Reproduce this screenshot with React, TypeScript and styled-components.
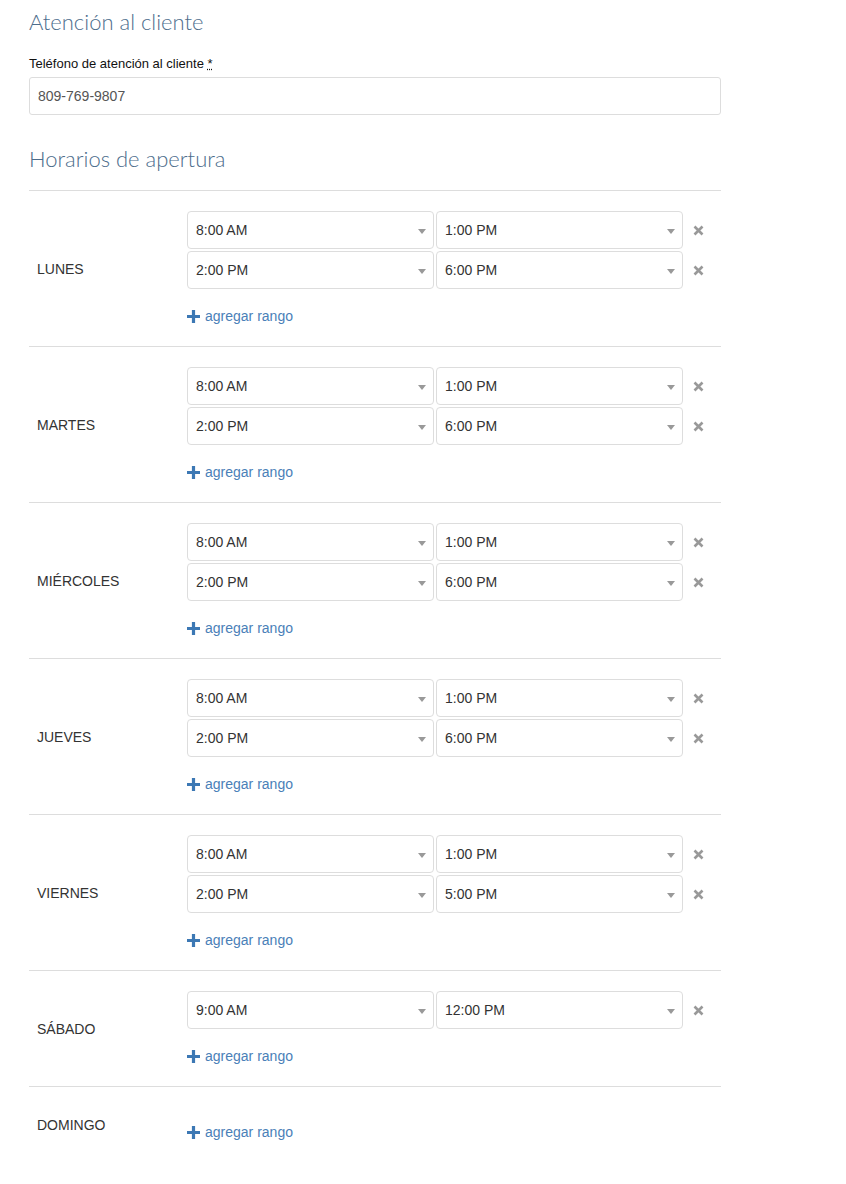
import styled, { createGlobalStyle } from "styled-components";

type Range = [string, string];
type Day = { name: string; ranges: Range[] };

const days: Day[] = [
  { name: "LUNES", ranges: [["8:00 AM", "1:00 PM"], ["2:00 PM", "6:00 PM"]] },
  { name: "MARTES", ranges: [["8:00 AM", "1:00 PM"], ["2:00 PM", "6:00 PM"]] },
  { name: "MIÉRCOLES", ranges: [["8:00 AM", "1:00 PM"], ["2:00 PM", "6:00 PM"]] },
  { name: "JUEVES", ranges: [["8:00 AM", "1:00 PM"], ["2:00 PM", "6:00 PM"]] },
  { name: "VIERNES", ranges: [["8:00 AM", "1:00 PM"], ["2:00 PM", "5:00 PM"]] },
  { name: "SÁBADO", ranges: [["9:00 AM", "12:00 PM"]] },
  { name: "DOMINGO", ranges: [] },
];

const GlobalStyle = createGlobalStyle`
  body {
    margin: 0;
    background: #fff;
    font-family: "Liberation Sans", Arial, sans-serif;
    color: #333;
  }
`;

const TimeSelect = ({ value }: { value: string }) => (
  <SelectBox>
    <span>{value}</span>
    <Caret />
  </SelectBox>
);

const App = () => {
  return (
    <Page>
      <GlobalStyle />
      <SectionTitle>Atención al cliente</SectionTitle>
      <FieldLabel>
        Teléfono de atención al cliente <Required title="requerido">*</Required>
      </FieldLabel>
      <TextInput>809-769-9807</TextInput>

      <SectionTitle $top={30}>Horarios de apertura</SectionTitle>
      <Schedule>
        {days.map((day) => (
          <DayRow key={day.name}>
            <DayName>{day.name}</DayName>
            <DayRanges>
              {day.ranges.map(([from, to], i) => (
                <RangeRow key={i}>
                  <TimeSelect value={from} />
                  <TimeSelect value={to} />
                  <RemoveButton>
                    <svg width="11" height="11" viewBox="0 0 11 11">
                      <path
                        d="M1.5 1.5 L9.5 9.5 M9.5 1.5 L1.5 9.5"
                        stroke="#999"
                        strokeWidth="2.6"
                      />
                    </svg>
                  </RemoveButton>
                </RangeRow>
              ))}
              <AddRange>
                <svg width="13" height="13" viewBox="0 0 13 13">
                  <path d="M6.5 0 V13 M0 6.5 H13" stroke="#3c78b4" strokeWidth="3.2" />
                </svg>
                agregar rango
              </AddRange>
            </DayRanges>
          </DayRow>
        ))}
      </Schedule>
    </Page>
  );
};

export default App;

const Page = styled.div`
  width: 692px;
  padding: 8px 0 20px 29px;
`;

const SectionTitle = styled.h2<{ $top?: number }>`
  margin: ${(p) => p.$top ?? 0}px 0 0 0;
  font-family: Lato, "Open Sans", sans-serif;
  font-weight: 300;
  font-size: 22px;
  line-height: 28px;
  color: #4d6d8c;
`;

const FieldLabel = styled.div`
  margin-top: 20px;
  font-size: 13px;
  line-height: 15px;
  color: #111;
`;

const Required = styled.abbr`
  text-decoration: underline dotted;
  cursor: help;
`;

const TextInput = styled.div`
  margin-top: 6px;
  height: 38px;
  box-sizing: border-box;
  border: 1px solid #ddd;
  border-radius: 3px;
  padding: 0 8px;
  display: flex;
  align-items: center;
  font-size: 14px;
  color: #555;
`;

const Schedule = styled.div`
  margin-top: 17px;
  border-top: 1px solid #ddd;
`;

const DayRow = styled.div`
  display: flex;
  align-items: center;
  border-bottom: 1px solid #ddd;
  &:last-child {
    border-bottom: none;
  }
`;

const DayName = styled.div`
  flex: 0 0 158px;
  padding-left: 8px;
  box-sizing: border-box;
  font-size: 14px;
  color: #333;
`;

const DayRanges = styled.div`
  flex: 1;
  min-width: 0;
  padding: 20px 0;
  display: flex;
  flex-direction: column;
  gap: 2px;
`;

const RangeRow = styled.div`
  display: flex;
  align-items: center;
  gap: 2px;
`;

const SelectBox = styled.div`
  position: relative;
  flex: 0 0 247px;
  height: 38px;
  box-sizing: border-box;
  border: 1px solid #ddd;
  border-radius: 4px;
  padding: 0 8px;
  display: flex;
  align-items: center;
  font-size: 14px;
  color: #333;
  background: #fff;
`;

const Caret = styled.span`
  position: absolute;
  right: 7px;
  top: 17px;
  width: 0;
  height: 0;
  border-left: 4px solid transparent;
  border-right: 4px solid transparent;
  border-top: 5px solid #999;
`;

const RemoveButton = styled.button`
  flex: 0 0 34px;
  height: 38px;
  border: none;
  background: none;
  padding: 0 0 0 8px;
  display: flex;
  align-items: center;
  justify-content: flex-start;
  cursor: pointer;
`;

const AddRange = styled.a`
  margin-top: 15px;
  height: 20px;
  display: flex;
  align-items: center;
  gap: 5px;
  font-size: 14px;
  color: #4a80b8;
  cursor: pointer;
`;
